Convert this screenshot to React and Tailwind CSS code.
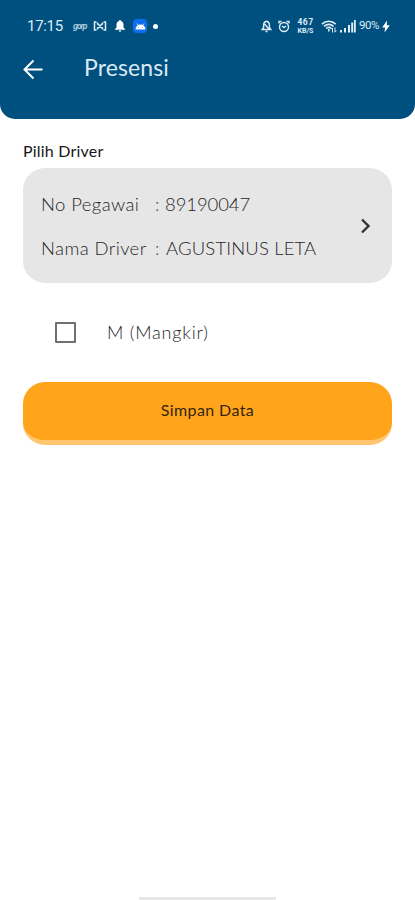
import React, { useState } from 'react';

const driver = {
  noPegawai: '89190047',
  nama: 'AGUSTINUS LETA',
};

const StatusBar = () => {
  return (
    <div className="flex h-[52px] items-center justify-between pl-[27px] pr-[25px] font-['Roboto',sans-serif] text-[#dcecf8]">
      <div className="flex items-center">
        <span className="w-[46px] whitespace-nowrap text-[15px] leading-none tracking-[-0.3px]">17:15</span>
        <span className="w-[20px] text-[9px] font-bold italic leading-none tracking-[-1.200px] text-[#a9c8dd]">gorp</span>
        <svg className="h-[10px] w-[14px]" viewBox="0 0 14 10" fill="none" stroke="currentColor" strokeWidth="1.5">
          <path d="M3.500 1H1.500v8h2M10.500 1h2v8h-2M4.500 2.500L9.500 7.500M9.500 2.500L4.500 7.500" />
          <path d="M4.500 1.500v2M9.500 1.500v2M4.500 6.500v2M9.500 6.500v2" strokeWidth="1.4" />
        </svg>
        <svg className="ml-[7px] h-[12px] w-[12px]" viewBox="0 0 12 12" fill="#fff">
          <path d="M6 0a1 1 0 0 0-1 1C3.300 1.500 2.500 3 2.500 4.800v2.700L.8 9.200v.6h10.400v-.6L9.500 7.500V4.800C9.500 3 8.700 1.500 7 1a1 1 0 0 0-1-1zM4.700 10.500a1.300 1.300 0 0 0 2.600 0z" />
        </svg>
        <span className="ml-[7px] flex h-[14px] w-[14px] items-center justify-center rounded-[4px] bg-[#0b6df0]">
          <svg className="h-[7px] w-[11px]" viewBox="0 0 11 7" fill="#fff">
            <path d="M.5 6.500a5 5 0 0 1 10 0z" />
            <path d="M2 .5l1.300 2M9 .5l-1.300 2" stroke="#fff" strokeWidth=".8" />
            <circle cx="3.500" cy="4.500" r=".4" fill="#0b6df0" />
            <circle cx="7.500" cy="4.500" r=".4" fill="#0b6df0" />
          </svg>
        </span>
        <span className="ml-[6px] h-[5px] w-[5px] rounded-full bg-white" />
      </div>

      <div className="flex items-center">
        <svg className="h-[13px] w-[11px]" viewBox="0 0 11 13" fill="none" stroke="currentColor" strokeWidth="1.400">
          <path d="M5.500 1.200C3.300 1.600 2.600 3.300 2.600 5v2.500L1.200 9.500h8.600L8.400 7.500V5c0-1.700-.7-3.400-2.900-3.800zM4.500 11.500h2M3.500 4l4.500 5" />
        </svg>
        <svg className="ml-[6px] h-[13px] w-[12px]" viewBox="0 0 12 13" fill="none" stroke="currentColor" strokeWidth="1.400">
          <circle cx="6" cy="7" r="4.500" />
          <path d="M1 3.500V1.500h2.500M11 3.500V1.500H8.500M4 6l2 1.500L8 6" />
        </svg>
        <span className="ml-[7px] flex w-[17px] flex-col items-center gap-[1px] font-bold">
          <span className="text-[8.500px] leading-[8px] tracking-[0.5px]">467</span>
          <span className="text-[7px] leading-[8px]">KB/S</span>
        </span>
        <svg className="ml-[7px] h-[13px] w-[16px]" viewBox="0 0 16 13" fill="none" stroke="currentColor" strokeWidth="1.600">
          <path d="M.8 4.200C5 .4 10.500.4 14.800 4.200M3 6.400c3-2.500 6.600-2.500 9.600 0M5.200 8.500c1.600-1.300 3.600-1.300 5.200 0M7.800 9v2.500" />
          <path d="M11.500 12.500V8M10.200 9.200L11.500 7.800M14 7.500V12M15.300 10.800L14 12.300" strokeWidth="1" />
        </svg>
        <svg className="ml-[3px] h-[13px] w-[17px]" viewBox="0 0 17 13" fill="currentColor">
          <rect x="0" y="10" width="2" height="2.500" />
          <rect x="4" y="8" width="2" height="4.500" />
          <rect x="8" y="5" width="2" height="7.500" />
          <rect x="11.200" y="2.500" width="2" height="10" />
          <rect x="14" y="0" width="1.800" height="12.500" />
        </svg>
        <span className="ml-[2px] w-[23px] whitespace-nowrap text-[11.500px] leading-none tracking-[-0.5px]">90%</span>
        <svg className="h-[13px] w-[8px]" viewBox="0 0 8 13" fill="#fff">
          <path d="M5 .5L.2 7.500h2.900L2.500 12.500 7.800 5.300H4.800z" />
        </svg>
      </div>
    </div>
  );
};

const Header = () => {
  return (
    <header className="h-[119px] rounded-b-[15px] bg-[#00507f]">
      <StatusBar />
      <div className="flex h-[34px] items-center pl-[22px]">
        <button className="w-[62px]">
          <svg className="h-[22px] w-[22px]" viewBox="0 0 22 22" fill="none" stroke="#fff" strokeWidth="2">
            <path d="M20.500 11.500H3M11.500 2.500l-9 9 9 9" />
          </svg>
        </button>
        <h1 className="whitespace-nowrap pb-[3px] text-[23px] leading-none tracking-[0.1px] text-[#dbe9f4]">Presensi</h1>
      </div>
    </header>
  );
};

const DriverRow = ({ label, value, valueClass }) => {
  return (
    <div className="flex h-[44px] items-center whitespace-nowrap text-[18.500px] font-light leading-none text-[#262628]">
      <span className="w-[114px] tracking-[0.4px]">{label}</span>
      <span className="w-[10px] text-[#555]">:</span>
      <span className={valueClass}>{value}</span>
    </div>
  );
};

const App = () => {
  const [mangkir, setMangkir] = useState(false);

  return (
    <div className="flex h-[900px] w-[415px] flex-col overflow-hidden bg-white font-['Lato',sans-serif]">
      <Header />

      <main className="flex-1 px-[23px]">
        <p className="mt-[24px] whitespace-nowrap text-[16px] leading-[16px] tracking-[0.2px] text-[#161616]">Pilih Driver</p>

        {/* Driver card */}
        <div className="mt-[9px] flex h-[115px] w-[369px] items-center justify-between rounded-[22px] bg-[#e6e6e6] pl-[18px] pr-[21px]">
          <div className="pt-[1px]">
            <DriverRow label="No Pegawai" value={driver.noPegawai} valueClass="tracking-[-0.1px]" />
            <DriverRow label="Nama Driver" value={driver.nama} valueClass="ml-[1px] tracking-[0.15px]" />
          </div>
          <svg className="h-[16px] w-[11px]" viewBox="0 0 11 16" fill="none" stroke="#333" strokeWidth="2.400">
            <path d="M2 1.500L8.500 8 2 14.500" />
          </svg>
        </div>

        {/* Mangkir */}
        <label className="mt-[37px] flex h-[24px] items-center pl-[32px]">
          <input
            type="checkbox"
            checked={mangkir}
            onChange={(e) => setMangkir(e.target.checked)}
            className="h-[21px] w-[21px] appearance-none rounded-[1px] border-2 border-[#707070] checked:bg-[#00507f]"
          />
          <span className="ml-[31px] whitespace-nowrap pb-[1px] text-[18px] font-light leading-none tracking-[0.8px] text-[#262628]">M (Mangkir)</span>
        </label>

        <button className="mt-[38px] flex h-[63px] w-[369px] items-center justify-center rounded-[22px] border-b-[5px] border-[#ffc56f] bg-[#ffa41b] pb-[3px] text-[16px] leading-none tracking-[0.4px] text-[#33260f]">
          Simpan Data
        </button>
      </main>

      {/* Gesture bar */}
      <div className="mx-auto h-[3px] w-[137px] bg-[#e7e7e7]" />
    </div>
  );
};

export default App;
